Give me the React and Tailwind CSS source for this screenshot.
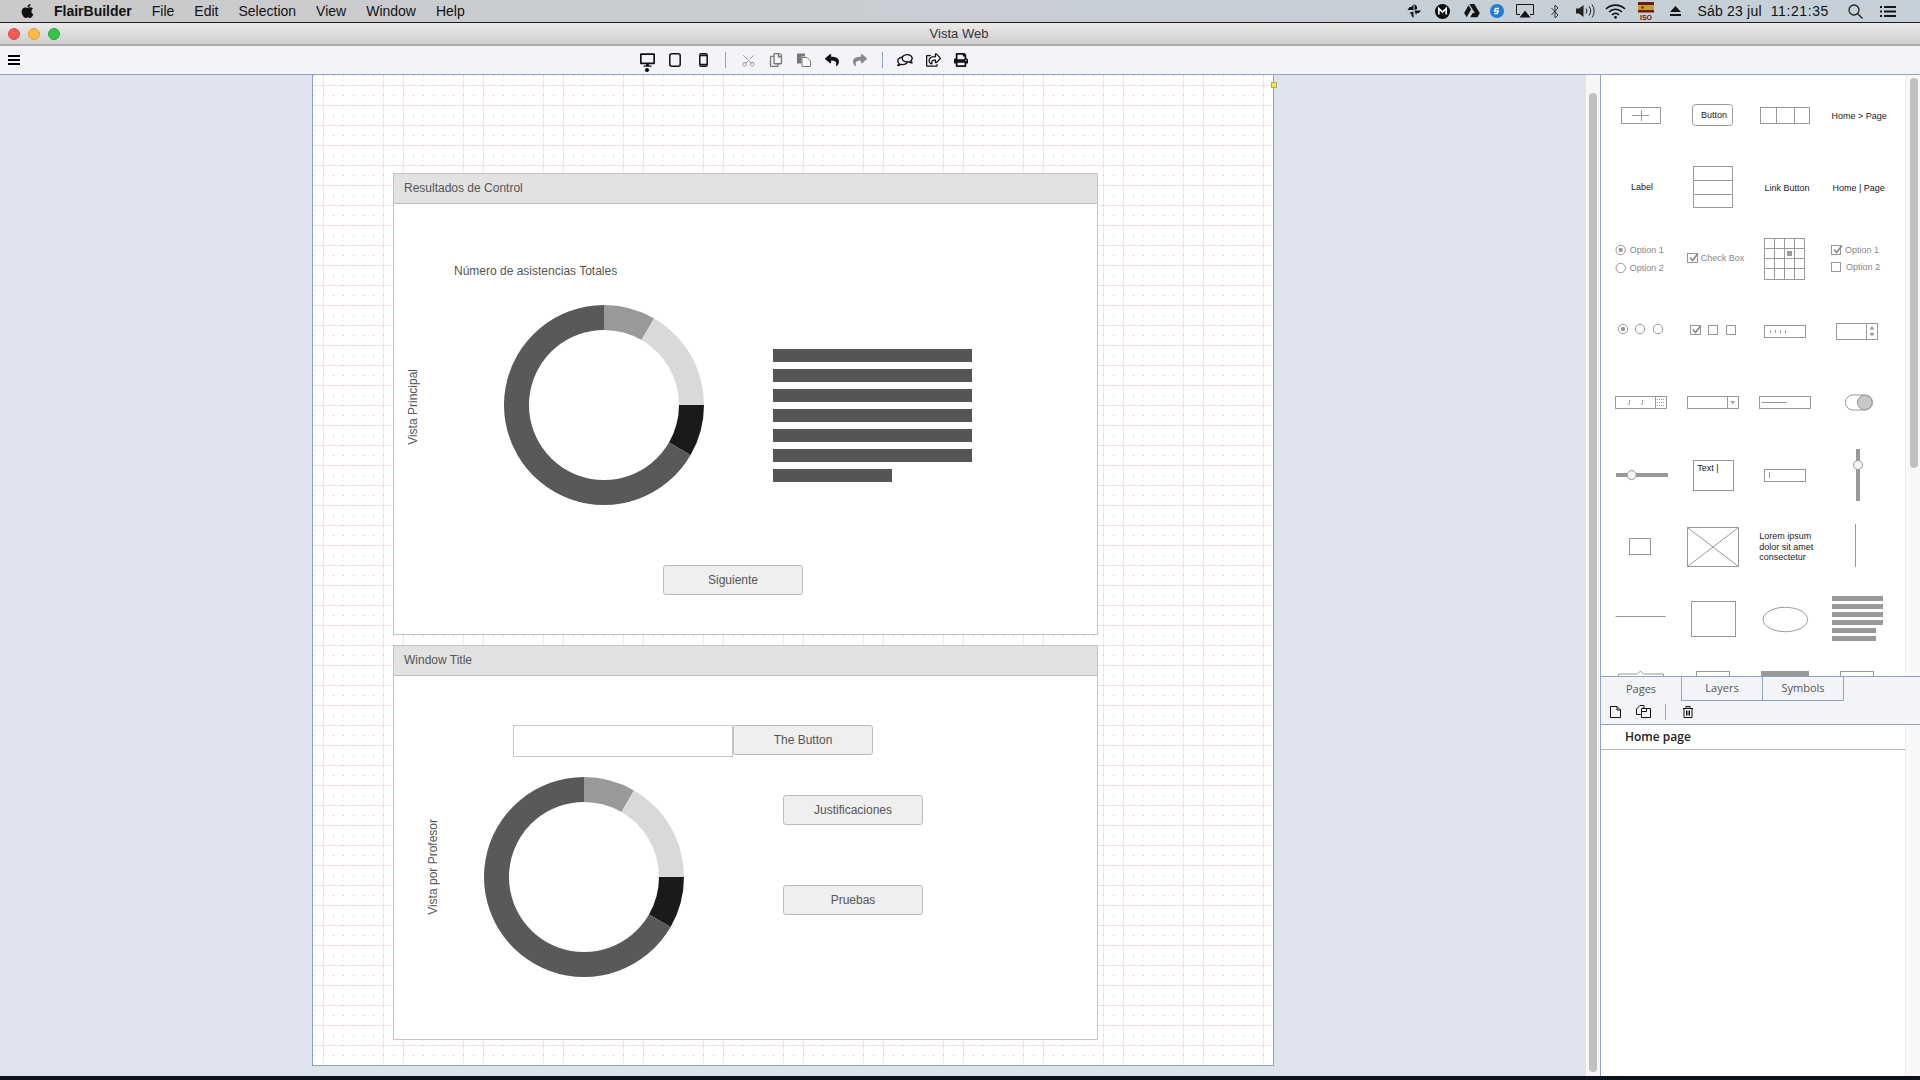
import { Scissors } from "lucide-react";
import {
  FaApple,
  FaDesktop,
  FaPrint,
  FaRegComments,
  FaRegCopy,
  FaRegShareSquare,
  FaReply,
  FaShare,
} from "react-icons/fa";

const MENU = ["File", "Edit", "Selection", "View", "Window", "Help"];

const Txt = ({ x, y, c = "#222", s = 9, children }) => (
  <text x={x} y={y} fill={c} stroke="none" fontSize={s}>
    {children}
  </text>
);

const Rect = ({ x, y, w, h, r = 0 }) => <rect x={x} y={y} width={w} height={h} rx={r} />;

const L = ({ a, b, c, d }) => <line x1={a} y1={b} x2={c} y2={d} />;

const Tick = ({ x, y }) => (
  <path d={`M${x} ${y + 2.5}l2.500 3l5.500 -7`} fill="none" stroke="#888" strokeWidth="1.700" />
);

const Radio = ({ cx, cy, on }) => (
  <>
    <circle cx={cx} cy={cy} r="4.7" />
    {on && <circle cx={cx} cy={cy} r="2.2" fill="#999" stroke="none" />}
  </>
);

const PALETTE = [
  <>
    <Rect x={16.5} y={28.5} w={39} h={16} />
    <L a={27} b={36.5} c={44} d={36.5} />
    <L a={36.5} b={31} c={36.5} d={42} />
  </>,
  <>
    <Rect x={15.5} y={25.5} w={40} h={21} r={3} />
    <Txt x={24} y={39}>Button</Txt>
  </>,
  <>
    <Rect x={11.5} y={28.5} w={49} h={16} />
    <L a={27.5} b={28.5} c={27.5} d={44.5} />
    <L a={45.5} b={28.5} c={45.5} d={44.5} />
  </>,
  <Txt x={10.5} y={40}>{"Home > Page"}</Txt>,

  <Txt x={26} y={39}>Label</Txt>,
  <>
    <Rect x={16.5} y={15.5} w={39} h={41} />
    <L a={16.5} b={29.5} c={55.5} d={29.5} />
    <L a={16.5} b={43.5} c={55.5} d={43.5} />
  </>,
  <Txt x={15.5} y={40}>Link Button</Txt>,
  <Txt x={11.5} y={40}>Home | Page</Txt>,

  <>
    <Radio cx={15.7} cy={27} on />
    <Txt x={24.7} y={30} c="#888">Option 1</Txt>
    <Radio cx={15.7} cy={45} />
    <Txt x={24.7} y={48} c="#888">Option 2</Txt>
  </>,
  <>
    <Rect x={10.5} y={30.5} w={10} h={9} />
    <Tick x={13} y={32} />
    <Txt x={23.7} y={38} c="#888">Check Box</Txt>
  </>,
  <>
    <Rect x={15.5} y={15.5} w={40} h={41} />
    {[25.5, 35.5, 45.5].map((v) => (
      <g key={v}>
        <L a={v} b={15.5} c={v} d={56.5} />
        <L a={15.5} b={v} c={55.5} d={v} />
      </g>
    ))}
    <rect x="38" y="28" width="5" height="5" fill="#999" stroke="none" />
  </>,
  <>
    <Rect x={10.5} y={22.5} w={9} h={9} />
    <Tick x={13} y={24} />
    <Txt x={24} y={30} c="#888">Option 1</Txt>
    <Rect x={10.5} y={39.5} w={9} h={9} />
    <Txt x={25} y={47} c="#888">Option 2</Txt>
  </>,

  <>
    <Radio cx={18} cy={34} on />
    <Radio cx={35} cy={34} />
    <Radio cx={53} cy={34} />
  </>,
  <>
    <Rect x={13.5} y={30.5} w={10} h={9} />
    <Tick x={16} y={32} />
    <Rect x={31.5} y={30.5} w={9} h={9} />
    <Rect x={49.5} y={30.5} w={9} h={9} />
  </>,
  <>
    <Rect x={15.5} y={30.5} w={41} h={12} />
    {[21.5, 26.5, 31.5, 36.5].map((v) => (
      <L key={v} a={v} b={35} c={v} d={38} />
    ))}
  </>,
  <>
    <Rect x={15.5} y={28.5} w={41} h={16} />
    <L a={45.5} b={28.5} c={45.5} d={44.5} />
    <path d="M48.5 34.5l2.5 -3.5l2.5 3.5zM48.5 38l2.5 3.5l2.5 -3.5z" fill="#999" stroke="none" />
  </>,

  <>
    <Rect x={10.5} y={29.5} w={51} h={12} />
    <L a={50.5} b={29.5} c={50.5} d={41.5} />
    <L a={24.8} b={33} c={23.8} d={38} />
    <L a={37.8} b={33} c={36.8} d={38} />
    {[32.5, 35.5, 38.5].map((v) => (
      <line key={v} x1="52" y1={v} x2="60" y2={v} strokeDasharray="1 1" />
    ))}
  </>,
  <>
    <Rect x={10.5} y={29.5} w={51} h={12} />
    <L a={50.5} b={29.5} c={50.5} d={41.5} />
    <path d="M53.5 34l2.2 3.5l2.2 -3.5z" fill="#999" stroke="none" />
  </>,
  <>
    <Rect x={10.5} y={29.5} w={51} h={12} />
    <L a={12.5} b={35.5} c={37.5} d={35.5} />
  </>,
  <>
    <Rect x={24.5} y={28} w={27} h={15} r={7.5} />
    <circle cx="43.7" cy="35.5" r="7.3" fill="#c8c8c8" />
  </>,

  <>
    <rect x="11" y="34" width="52" height="4" fill="#999" stroke="none" />
    <circle cx="26.7" cy="36" r="4.5" fill="#f5f5f5" />
  </>,
  <>
    <Rect x={16.5} y={21.5} w={40} h={30} />
    <Txt x={20.3} y={32}>Text |</Txt>
  </>,
  <>
    <Rect x={15.5} y={30.5} w={41} h={12} />
    <L a={20.5} b={33} c={20.5} d={39} />
  </>,
  <>
    <rect x="35" y="10" width="4" height="52" fill="#999" stroke="none" />
    <circle cx="37" cy="26" r="4.5" fill="#f5f5f5" />
  </>,

  <Rect x={24.5} y={27.5} w={21} h={16} />,
  <>
    <Rect x={10.5} y={16.5} w={51} h={39} />
    <L a={10.5} b={16.5} c={61.5} d={55.5} />
    <L a={61.5} b={16.5} c={10.5} d={55.5} />
  </>,
  <>
    <Txt x={10.3} y={28}>Lorem ipsum</Txt>
    <Txt x={10.3} y={38.7}>dolor sit amet</Txt>
    <Txt x={10.3} y={48.7}>consectetur</Txt>
  </>,
  <L a={34.5} b={13} c={34.5} d={56} />,

  <L a={10.5} b={33.5} c={60.5} d={33.5} />,
  <Rect x={14.5} y={18.5} w={44} h={35} />,
  <ellipse cx="36.3" cy="36.5" rx="22.3" ry="12.2" />,
  <g fill="#999" stroke="none">
    {[13, 21, 29, 37].map((v) => (
      <rect key={v} x="11" y={v} width="51" height="5" />
    ))}
    <rect x="11" y="45" width="44" height="5" />
    <rect x="11" y="53" width="44" height="5" />
  </g>,

  <path d="M13.5 24v-5h19l3 -3l3 3h20v5" />,
  <Rect x={19.5} y={16.5} w={33} h={20} />,
  <rect x="12" y="16" width="48" height="20" fill="#999" stroke="none" />,
  <Rect x={19.5} y={16.5} w={33} h={20} />,
];

// wedge of the ring between two angles, measured clockwise from the top
const wedge = (from, to) => {
  const pt = (r, deg) => {
    const a = (deg * Math.PI) / 180;
    return `${(100 + r * Math.sin(a)).toFixed(2)} ${(100 - r * Math.cos(a)).toFixed(2)}`;
  };
  const big = to - from > 180 ? 1 : 0;
  return `M${pt(100, from)}A100 100 0 ${big} 1 ${pt(100, to)}L${pt(75, to)}A75 75 0 ${big} 0 ${pt(75, from)}Z`;
};

const Donut = ({ className }) => (
  <svg viewBox="0 0 200 200" className={`w-[200px] h-[200px] shrink-0 ${className}`}>
    <path d={wedge(0, 30)} fill="#999999" />
    <path d={wedge(30, 90)} fill="#d9d9d9" />
    <path d={wedge(90, 120)} fill="#1a1a1a" />
    <path d={wedge(120, 360)} fill="#595959" />
  </svg>
);

const WireButton = ({ label, className = "" }) => (
  <div
    className={`flex items-center justify-center w-[140px] h-[30px] shrink-0 rounded-[3px] border border-[#bdbdbd] bg-[#efefef] text-[12px] text-[#555] ${className}`}
  >
    {label}
  </div>
);

const WireWindow = ({ title, height, children }) => (
  <div className={`flex flex-col w-[705px] ${height} border border-[#c4c4c4] bg-white`}>
    <div className="flex items-center shrink-0 h-[30px] pl-[10px] pb-[2px] border-b border-[#bdbdbd] bg-[#e2e2e2] text-[12px] text-[#555]">
      {title}
    </div>
    {children}
  </div>
);

const SideLabel = ({ label, className = "" }) => (
  <div
    className={`w-[16px] shrink-0 [writing-mode:vertical-rl] rotate-180 text-center text-[12px] leading-[16px] text-[#555] whitespace-nowrap ${className}`}
  >
    {label}
  </div>
);

const ToolCell = ({ children }) => (
  <div className="relative flex items-center justify-center w-[28px] h-[28px]">{children}</div>
);

const ToolSep = () => (
  <div className="flex items-center justify-center w-[17px]">
    <div className="w-px h-[16px] bg-[#8fa3cc]" />
  </div>
);

const StatusIcons = () => (
  <div className="flex items-center">
    <svg viewBox="0 0 16 16" className="w-[16px] h-[16px]" fill="#111">
      <path d="M7.5 1v6h-6l2 -3h2zM8.500 7.500h6.500l-2 2.500h-2l-1 2zM7.500 8.500v6.500l-2 -2v-2l-2.500 -1zM8.500 1l2.500 2.500v2.500l-2.500 1z" />
    </svg>
    <svg viewBox="0 0 15 15" className="w-[15px] h-[15px] ml-[13px]">
      <circle cx="7.500" cy="7.500" r="7.500" fill="#0c0c0c" />
      <path d="M3.800 10.500v-6l3.700 3.500l3.700 -3.500v6" fill="none" stroke="#fff" strokeWidth="1.700" />
    </svg>
    <svg viewBox="0 0 16 14" className="w-[16px] h-[14px] ml-[14px]" fill="#151515">
      <path d="M5.300 0h5l5.500 9h-5zM4.500 1.300l2.600 4.300l-4.400 7.700l-2.600 -4.300zM6.200 13.300l2.400 -4.200h7.200l-2.400 4.200z" />
    </svg>
    <svg viewBox="0 0 14 14" className="w-[14px] h-[14px] ml-[10px]">
      <circle cx="7" cy="7" r="7" fill="#1c7ed6" />
      <path d="M9 4.500h-3.500l-1 2.500h3.800l-1 2.500h-3" fill="none" stroke="#fff" strokeWidth="1.300" />
    </svg>
    <svg viewBox="0 0 18 14" className="w-[18px] h-[14px] ml-[12px]">
      <path d="M4 10.500h-3.500v-10h17v10h-3.500" fill="none" stroke="#151515" />
      <path d="M9 6.500l5.500 7h-11z" fill="#151515" />
    </svg>
    <svg viewBox="0 0 8 15" className="w-[8px] h-[15px] ml-[17px]">
      <path d="M0.500 4l6.500 7l-3 3v-13l3 3l-6.500 7" fill="none" stroke="#222" strokeWidth="0.900" />
    </svg>
    <svg viewBox="0 0 21 14" className="w-[21px] h-[14px] ml-[17px]">
      <path d="M0 4.500h3l4.500 -3.500v12l-4.500 -3.500h-3z" fill="#222" />
      <path d="M10 4.500a4 4 0 0 1 0 5M13 2.500a7.500 7.500 0 0 1 0 9M16 0.500a11 11 0 0 1 0 13" fill="none" stroke="#222" strokeWidth="1" />
    </svg>
    <svg viewBox="0 0 21 15" className="w-[21px] h-[15px] ml-[8px]">
      <path d="M1 5a13.500 13.500 0 0 1 19 0M4 8a9 9 0 0 1 13 0M7 11a4.500 4.500 0 0 1 7 0" fill="none" stroke="#151515" strokeWidth="1.600" />
      <circle cx="10.500" cy="13.300" r="1.400" fill="#151515" />
    </svg>
    <svg viewBox="0 0 16 18" className="w-[16px] h-[18px] ml-[12px]">
      <rect width="16" height="3" fill="#6b1a10" />
      <rect y="3" width="16" height="5" fill="#c9a020" />
      <rect x="3" y="4.500" width="3" height="2" fill="#8a2a18" />
      <rect y="8" width="16" height="2.500" fill="#6b1a10" />
      <text x="8" y="17.500" fontSize="7" fontWeight="bold" textAnchor="middle" fill="#7a1010">ISO</text>
    </svg>
    <svg viewBox="0 0 11 10" className="w-[11px] h-[10px] ml-[16px]" fill="#151515">
      <path d="M5.500 0l5.500 6h-11zM0 8h11v2h-11z" />
    </svg>
  </div>
);

const MenuBar = () => (
  <div className="flex items-center shrink-0 h-[23px] pl-[20px] pr-[24px] border-b border-[#1c1c1c] bg-[linear-gradient(90deg,#cacaca,#c9ced3_45%,#c5d0d8)] text-[14px] text-[#111]">
    <FaApple className="w-[15px] h-[16px] text-[#111]" />
    <span className="ml-[19px] mr-[20px] font-bold">FlairBuilder</span>
    <div className="flex gap-5">
      {MENU.map((m) => (
        <span key={m}>{m}</span>
      ))}
    </div>
    <div className="flex items-center ml-auto">
      <StatusIcons />
      <span className="ml-[16px] tracking-[0.2px]">Sáb 23 jul</span>
      <span className="ml-[9px] tracking-[0.6px]">11:21:35</span>
      <svg viewBox="0 0 15 15" className="w-[15px] h-[15px] ml-[19px]" fill="none" stroke="#222" strokeWidth="1.300">
        <circle cx="6" cy="6" r="5" />
        <path d="M9.700 9.700l4.800 4.800" />
      </svg>
      <svg viewBox="0 0 16 11" className="w-[16px] h-[11px] ml-[17px]" fill="#151515">
        <path d="M0 0h2v2h-2zM4 0h12v2h-12zM0 4.500h2v2h-2zM4 4.500h12v2h-12zM0 9h2v2h-2zM4 9h12v2h-12z" />
      </svg>
    </div>
  </div>
);

const TitleBar = () => (
  <div className="relative flex items-center shrink-0 h-[23px] border-b-2 border-[#a9a9a9] bg-[linear-gradient(#ebebeb,#cfcfcf)]">
    <div className="flex gap-[8px] pl-[8px]">
      <div className="w-[12px] h-[12px] rounded-full bg-[#fc5753] border border-[#df4744]" />
      <div className="w-[12px] h-[12px] rounded-full bg-[#fdbc40] border border-[#de9f34]" />
      <div className="w-[12px] h-[12px] rounded-full bg-[#33c748] border border-[#27aa35]" />
    </div>
    <span className="flex-1 pr-[62px] text-center text-[13px] text-[#333]">Vista Web</span>
  </div>
);

const Toolbar = () => (
  <div className="flex items-center shrink-0 h-[29px] border-b border-[#8fa3cc] bg-[#f2f4f8]">
    <div className="flex flex-col gap-[2px] ml-[8px]">
      <div className="w-[12px] h-[2px] bg-black" />
      <div className="w-[12px] h-[2px] bg-black" />
      <div className="w-[12px] h-[2px] bg-black" />
    </div>
    <div className="flex ml-[613px]">
      <ToolCell>
        <FaDesktop className="w-[15px] h-[14px] text-[#111]" />
        <div className="absolute left-[12px] top-[22px] w-[4px] h-[4px] rounded-full bg-black" />
      </ToolCell>
      <ToolCell>
        <svg viewBox="0 0 12 14" className="w-[12px] h-[14px]" fill="none" stroke="#111" strokeWidth="1.500">
          <rect x="0.800" y="0.800" width="10.400" height="12.400" rx="2" />
        </svg>
      </ToolCell>
      <ToolCell>
        <svg viewBox="0 0 9 14" className="w-[9px] h-[14px]" fill="none" stroke="#111" strokeWidth="1.500">
          <rect x="0.800" y="0.800" width="7.400" height="12.400" rx="1.500" />
          <path d="M1 2.500h7M1 11.500h7" />
        </svg>
      </ToolCell>
      <ToolSep />
      <ToolCell>
        <Scissors size={15} strokeWidth={1.500} className="-rotate-90 text-[#999]" />
      </ToolCell>
      <ToolCell>
        <FaRegCopy className="w-[14px] h-[14px] text-[#777]" />
      </ToolCell>
      <ToolCell>
        <svg viewBox="0 0 14 14" className="w-[14px] h-[14px]">
          <path d="M0 0.500h8v3h-3.500v7h-4.500z" fill="#777" />
          <path d="M5 4.500h5l3.500 3.500v5.500h-8.500z" fill="#fff" stroke="#777" />
        </svg>
      </ToolCell>
      <ToolCell>
        <FaReply className="w-[14px] h-[14px] text-[#111]" />
      </ToolCell>
      <ToolCell>
        <FaShare className="w-[14px] h-[14px] text-[#888]" />
      </ToolCell>
      <ToolSep />
      <ToolCell>
        <FaRegComments className="w-[16px] h-[14px] -scale-x-100 text-[#111]" />
      </ToolCell>
      <ToolCell>
        <FaRegShareSquare className="w-[15px] h-[14px] text-[#111]" />
      </ToolCell>
      <ToolCell>
        <FaPrint className="w-[14px] h-[14px] text-[#111]" />
      </ToolCell>
    </div>
  </div>
);

const Artboard = () => (
  <div className="relative w-[962px] h-[991px] pt-[98px] pl-[80px] border-x border-b border-[#8fa0c8] bg-white bg-[radial-gradient(circle_at_0.5px_0.5px,#c2c2c2_0.7px,transparent_0.9px),linear-gradient(#fbe0e4_1px,transparent_1px),linear-gradient(90deg,#e0eff8_1px,transparent_1px),linear-gradient(90deg,#e0eff8_1px,transparent_1px)] [background-size:10px_10px,100%_20px,80px_100%,80px_100%] [background-position:0_0,0_10px,10px_0,70px_0]">
    <div className="flex flex-col gap-[10px]">
      <WireWindow title="Resultados de Control" height="h-[462px]">
        <p className="pt-[59px] pl-[60px] text-[12px] leading-[16px] text-[#555]">
          Número de asistencias Totales
        </p>
        <div className="flex mt-[26px] pl-[11px]">
          <SideLabel label="Vista Principal" className="self-center mt-[4px]" />
          <Donut className="ml-[83px]" />
          <div className="flex flex-col gap-[7px] ml-[69px] mt-[44px]">
            {[0, 1, 2, 3, 4, 5].map((i) => (
              <div key={i} className="w-[199px] h-[13px] bg-[#555]" />
            ))}
            <div className="w-[119px] h-[13px] bg-[#555]" />
          </div>
        </div>
        <WireButton label="Siguiente" className="mt-[60px] ml-[269px]" />
      </WireWindow>
      <WireWindow title="Window Title" height="h-[395px]">
        <div className="flex items-start mt-[49px] ml-[119px]">
          <div className="w-[220px] h-[32px] border border-[#c8c8c8] bg-white" />
          <WireButton label="The Button" />
        </div>
        <div className="flex mt-[20px] pl-[31px]">
          <SideLabel label="Vista por Profesor" className="self-center mt-[-20px]" />
          <Donut className="ml-[43px]" />
          <div className="flex flex-col gap-[60px] ml-[99px] mt-[18px]">
            <WireButton label="Justificaciones" />
            <WireButton label="Pruebas" />
          </div>
        </div>
      </WireWindow>
    </div>
    <div className="absolute left-[958px] top-[7px] w-[6px] h-[6px] bg-[#f7e92e] border border-[#a8a878]" />
  </div>
);

const Palette = () => (
  <div className="flex shrink-0 h-[601px] overflow-hidden">
    <div className="grid grid-cols-[repeat(4,72px)] auto-rows-[72px] w-[304px] pt-[4px] pl-[4px]">
      {PALETTE.map((item, i) => (
        <svg key={i} viewBox="0 0 72 72" className="w-[72px] h-[72px]" fill="none" stroke="#999">
          {item}
        </svg>
      ))}
    </div>
    <div className="flex-1 pt-[3px] pl-[4px] border-l border-[#ececec] bg-[#f8f8f8]">
      <div className="w-[8px] h-[390px] rounded-full bg-[#c0c0c0]" />
    </div>
  </div>
);

const Tabs = () => (
  <div className="flex shrink-0 h-[25px] border-t border-[#8fa3cc] bg-[#f2f4f8] font-['Open_Sans',sans-serif] text-[11px] text-[#555]">
    <div className="flex items-center justify-center w-[81px] border-r border-[#8fa3cc]">Pages</div>
    <div className="flex items-center justify-center w-[81px] border-r border-b border-[#8fa3cc]">Layers</div>
    <div className="flex items-center justify-center w-[81px] border-r border-b border-[#8fa3cc]">Symbols</div>
  </div>
);

const PageTools = () => (
  <div className="flex items-center shrink-0 h-[24px] pl-[9px] pb-[2px] border-b border-[#8fa3cc] bg-[#f2f4f8]">
    <svg viewBox="0 0 11 12" className="w-[11px] h-[12px]" fill="none" stroke="#111">
      <path d="M0.500 0.500h6.500l3.500 3.500v7.500h-10zM7 0.500v3.500h3.500" />
    </svg>
    <svg viewBox="0 0 15 13" className="w-[15px] h-[13px] ml-[15px]" fill="none" stroke="#111">
      <path d="M5 9.500h-4.500v-5.500l3.500 -3.500h4v3" />
      <path d="M5.500 3.500h5l4 0v9h-9zM10.500 3.500v3h-5" />
    </svg>
    <div className="w-px h-[16px] ml-[14px] bg-[#8fa3cc]" />
    <svg viewBox="0 0 10 12" className="w-[10px] h-[12px] ml-[17px]" fill="none" stroke="#111">
      <path d="M0 2.500h10M3 2.500v-2h4v2M1 2.500v9h8v-9M3.500 4.500v5M5 4.500v5M6.500 4.500v5" />
    </svg>
  </div>
);

const PageList = () => (
  <div className="flex flex-1">
    <div className="flex-1 bg-white">
      <div className="flex items-center h-[25px] pl-[24px] border-b border-[#a9b8d6] font-['Open_Sans',sans-serif] text-[12px] font-semibold text-[#222]">
        Home page
      </div>
    </div>
    <div className="w-[15px] border-l border-[#ececec] bg-[#f8f8f8]" />
  </div>
);

export default function App() {
  return (
    <div className="flex flex-col w-[1920px] h-[1080px] overflow-hidden bg-[#dfe3ee] font-['Liberation_Sans',sans-serif]">
      <MenuBar />
      <TitleBar />
      <Toolbar />
      <div className="flex flex-1 min-h-0">
        <div className="w-[1586px] pl-[312px]">
          <Artboard />
        </div>
        <div className="w-[14px] pt-[18px] pl-[3px] bg-[#f6f6f6]">
          <div className="w-[8px] h-[979px] rounded-full bg-[#c0c0c0]" />
        </div>
        <div className="flex flex-col w-[320px] border-l border-[#8fa3cc] bg-white">
          <Palette />
          <Tabs />
          <PageTools />
          <PageList />
        </div>
      </div>
      <div className="shrink-0 h-[4px] bg-[#0b141c]" />
    </div>
  );
}
